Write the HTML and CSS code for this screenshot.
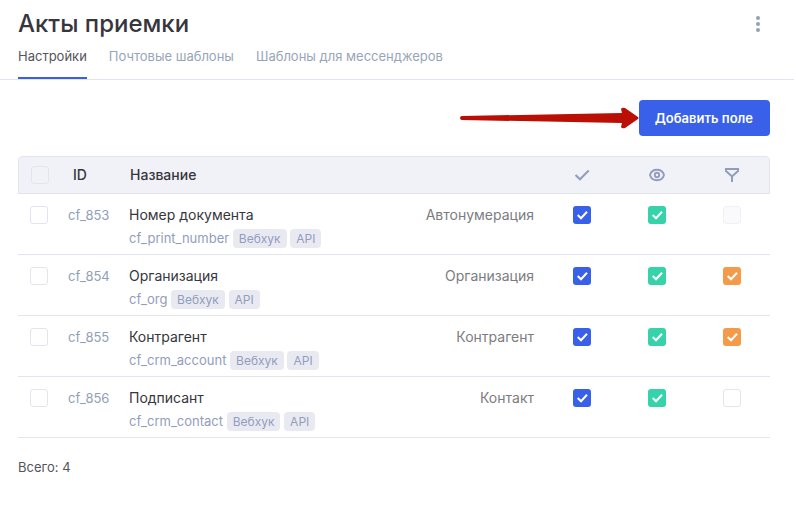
FILE: index.html
```html
<!doctype html>
<html lang="ru">
<head>
    <meta charset="UTF-8">
    <meta name="viewport" content="width=device-width, initial-scale=1.0">
    <title>Акты приемки</title>
    <link rel="stylesheet" href="styles.css">
</head>
<body>
    <!-- Page header -->
    <header class="header">
        <div class="header-top">
            <h1>Акты приемки</h1>
            <button type="button" class="menu-btn" aria-label="Меню">
                <svg width="4" height="16" viewBox="0 0 4 16" fill="#94a1ba">
                    <circle cx="2" cy="2" r="2"/>
                    <circle cx="2" cy="8" r="2"/>
                    <circle cx="2" cy="14" r="2"/>
                </svg>
            </button>
        </div>
        <nav class="tabs">
            <a href="#" class="tab active">Настройки</a>
            <a href="#" class="tab">Почтовые шаблоны</a>
            <a href="#" class="tab">Шаблоны для мессенджеров</a>
        </nav>
    </header>

    <main class="content">
        <div class="toolbar">
            <svg class="arrow" width="180" height="22" viewBox="0 0 180 22" fill="#b90f04">
                <path d="M3 9 L163 6 L162 2 Q163 0 166 1 L179 10 Q180 11 179 12 L166 21 Q163 22 162 20 L163 16 L3 13 Q1 13 1 11 Q1 9 3 9 Z"/>
            </svg>
            <button type="button" class="add-btn">Добавить поле</button>
        </div>

        <!-- Fields table -->
        <table class="fields">
            <colgroup>
                <col class="col-select">
                <col class="col-id">
                <col class="col-name">
                <col class="col-type">
                <col class="col-flag">
                <col class="col-flag">
                <col class="col-flag">
            </colgroup>
            <thead>
                <tr>
                    <th><input type="checkbox" class="check muted" aria-label="Выбрать все"></th>
                    <th class="id">ID</th>
                    <th>Название</th>
                    <th></th>
                    <th class="flag" aria-label="Обязательное">
                        <svg width="16" height="16" viewBox="0 0 16 16" fill="none" stroke="#929dbd" stroke-width="2">
                            <path d="M1.5 8 L6 12.3 L14.7 3.5"/>
                        </svg>
                    </th>
                    <th class="flag" aria-label="Отображать">
                        <svg width="16" height="16" viewBox="0 0 16 16" fill="none" stroke="#929dbd">
                            <path d="M1 8 C2 4.500 5 2.800 8 2.800 S14 4.500 15 8 C14 11.500 11 13.200 8 13.200 S2 11.500 1 8 Z" stroke-width="1.900"/>
                            <circle cx="8" cy="8" r="2.200" stroke-width="1.900"/>
                        </svg>
                    </th>
                    <th class="flag" aria-label="Фильтр">
                        <svg width="16" height="16" viewBox="0 0 16 16" fill="none" stroke="#929dbd" stroke-width="2">
                            <path d="M2 2 H14 V4 L8 9.500 L2 4 Z"/>
                            <path d="M8 9 V15"/>
                        </svg>
                    </th>
                </tr>
            </thead>
            <tbody>
                <tr>
                    <td><input type="checkbox" class="check" aria-label="Выбрать cf_853"></td>
                    <td class="id">cf_853</td>
                    <td>
                        <div class="name">Номер документа</div>
                        <div class="meta">cf_print_number <span class="badge">Вебхук</span> <span class="badge">API</span></div>
                    </td>
                    <td class="type">Автонумерация</td>
                    <td class="flag"><input type="checkbox" class="check blue" aria-label="Обязательное" checked></td>
                    <td class="flag"><input type="checkbox" class="check green" aria-label="Отображать" checked></td>
                    <td class="flag"><input type="checkbox" class="check orange" aria-label="Фильтр" disabled></td>
                </tr>
                <tr>
                    <td><input type="checkbox" class="check" aria-label="Выбрать cf_854"></td>
                    <td class="id">cf_854</td>
                    <td>
                        <div class="name">Организация</div>
                        <div class="meta">cf_org <span class="badge">Вебхук</span> <span class="badge">API</span></div>
                    </td>
                    <td class="type">Организация</td>
                    <td class="flag"><input type="checkbox" class="check blue" aria-label="Обязательное" checked></td>
                    <td class="flag"><input type="checkbox" class="check green" aria-label="Отображать" checked></td>
                    <td class="flag"><input type="checkbox" class="check orange" aria-label="Фильтр" checked></td>
                </tr>
                <tr>
                    <td><input type="checkbox" class="check" aria-label="Выбрать cf_855"></td>
                    <td class="id">cf_855</td>
                    <td>
                        <div class="name">Контрагент</div>
                        <div class="meta">cf_crm_account <span class="badge">Вебхук</span> <span class="badge">API</span></div>
                    </td>
                    <td class="type">Контрагент</td>
                    <td class="flag"><input type="checkbox" class="check blue" aria-label="Обязательное" checked></td>
                    <td class="flag"><input type="checkbox" class="check green" aria-label="Отображать" checked></td>
                    <td class="flag"><input type="checkbox" class="check orange" aria-label="Фильтр" checked></td>
                </tr>
                <tr>
                    <td><input type="checkbox" class="check" aria-label="Выбрать cf_856"></td>
                    <td class="id">cf_856</td>
                    <td>
                        <div class="name">Подписант</div>
                        <div class="meta">cf_crm_contact <span class="badge">Вебхук</span> <span class="badge">API</span></div>
                    </td>
                    <td class="type">Контакт</td>
                    <td class="flag"><input type="checkbox" class="check blue" aria-label="Обязательное" checked></td>
                    <td class="flag"><input type="checkbox" class="check green" aria-label="Отображать" checked></td>
                    <td class="flag"><input type="checkbox" class="check orange" aria-label="Фильтр"></td>
                </tr>
            </tbody>
        </table>

        <p class="total">Всего: 4</p>
    </main>
</body>
</html>
```
FILE: styles.css
```css
/* General Styles */
* {
    box-sizing: border-box;
}

body {
    margin: 0;
    font-family: Inter, 'Liberation Sans', sans-serif;
    font-size: 14px;
    line-height: 20px;
    color: #36363c;
    background-color: #fff;
}

/* Header */
.header {
    margin-right: 2px;
    padding: 8px 24px 0 18px;
    border-bottom: 1px solid #e3e4ef;
}

.header-top {
    display: flex;
    align-items: center;
    justify-content: space-between;
}

h1 {
    margin: 0;
    font-size: 24px;
    line-height: 32px;
    font-weight: 500;
}

.menu-btn {
    display: flex;
    padding: 4px 10px;
    border: none;
    background: none;
    cursor: pointer;
}

.tabs {
    display: flex;
    gap: 22px;
    margin-top: 6px;
}

.tab {
    padding-bottom: 11px;
    border-bottom: 2px solid transparent;
    font-size: 13px;
    color: #97a5b8;
    text-decoration: none;
}

.tab.active {
    color: #55555b;
    border-bottom-color: #3860e8;
}

/* Content */
.content {
    padding: 20px 26px 20px 18px;
}

.toolbar {
    display: flex;
    align-items: center;
    justify-content: flex-end;
    margin-bottom: 20px;
}

.add-btn {
    height: 36px;
    padding: 0 17px 0 16px;
    border: none;
    border-radius: 4px;
    background-color: #3860e8;
    color: #fff;
    font-family: inherit;
    font-size: 13px;
    font-weight: 600;
    cursor: pointer;
}

/* Fields table */
.fields {
    width: 100%;
    table-layout: fixed;
    border-collapse: separate;
    border-spacing: 0;
}

.col-select {
    width: 42px;
}

.col-id {
    width: 61px;
}

.col-type {
    width: 160px;
}

.col-flag {
    width: 75px;
}

th {
    height: 38px;
    padding: 0 9px;
    background-color: #f1f2f8;
    border-top: 1px solid #e3e4ef;
    border-bottom: 1px solid #e3e4ef;
    font-weight: 500;
    text-align: left;
}

th:first-child {
    padding-left: 12px;
    border-left: 1px solid #e3e4ef;
    border-top-left-radius: 5px;
}

th:last-child {
    border-right: 1px solid #e3e4ef;
    border-top-right-radius: 5px;
}

th.id {
    padding-left: 13px;
}

th svg {
    display: block;
    margin: 0 auto;
}

td {
    height: 61px;
    padding: 11px 8px 4px;
    border-bottom: 1px solid #e3e4ef;
    vertical-align: top;
}

td:first-child {
    padding-left: 12px;
}

td.id {
    font-size: 13px;
    color: #91a0b8;
}

td.type {
    padding-right: 11px;
    text-align: right;
    color: #7c7c80;
}

.flag {
    padding-left: 0;
    padding-right: 1px;
}

th.flag:last-child {
    padding-right: 0;
}

.meta {
    margin-top: 3px;
    font-size: 13px;
    color: #929dbd;
    white-space: nowrap;
}

.badge {
    display: inline-block;
    padding: 0 6px;
    border-radius: 4px;
    background-color: #e9eaf1;
    font-size: 12px;
    line-height: 19px;
}

/* Checkboxes */
.check {
    appearance: none;
    display: block;
    width: 18px;
    height: 18px;
    margin: 1px 0;
    border: 1px solid #e3e4ef;
    border-radius: 3px;
    background-color: #fff;
}

.flag .check {
    margin: 1px auto;
}

.check.muted {
    background-color: transparent;
}

.check:disabled {
    border-color: #f0f1f6;
    background-color: #fafafc;
}

.check:checked {
    border: none;
    background-image: url("data:image/svg+xml,%3Csvg xmlns='http://www.w3.org/2000/svg' viewBox='0 0 18 18'%3E%3Cpath d='M4.700 9 L8 12.200 L14 5.700' fill='none' stroke='white' stroke-width='2'/%3E%3C/svg%3E");
}

.check.blue:checked {
    background-color: #3860e8;
}

.check.green:checked {
    background-color: #36d3aa;
}

.check.orange:checked {
    background-color: #f49b4b;
}

.total {
    margin: 19px 0 0;
    font-size: 13px;
    color: #55555b;
}
```
